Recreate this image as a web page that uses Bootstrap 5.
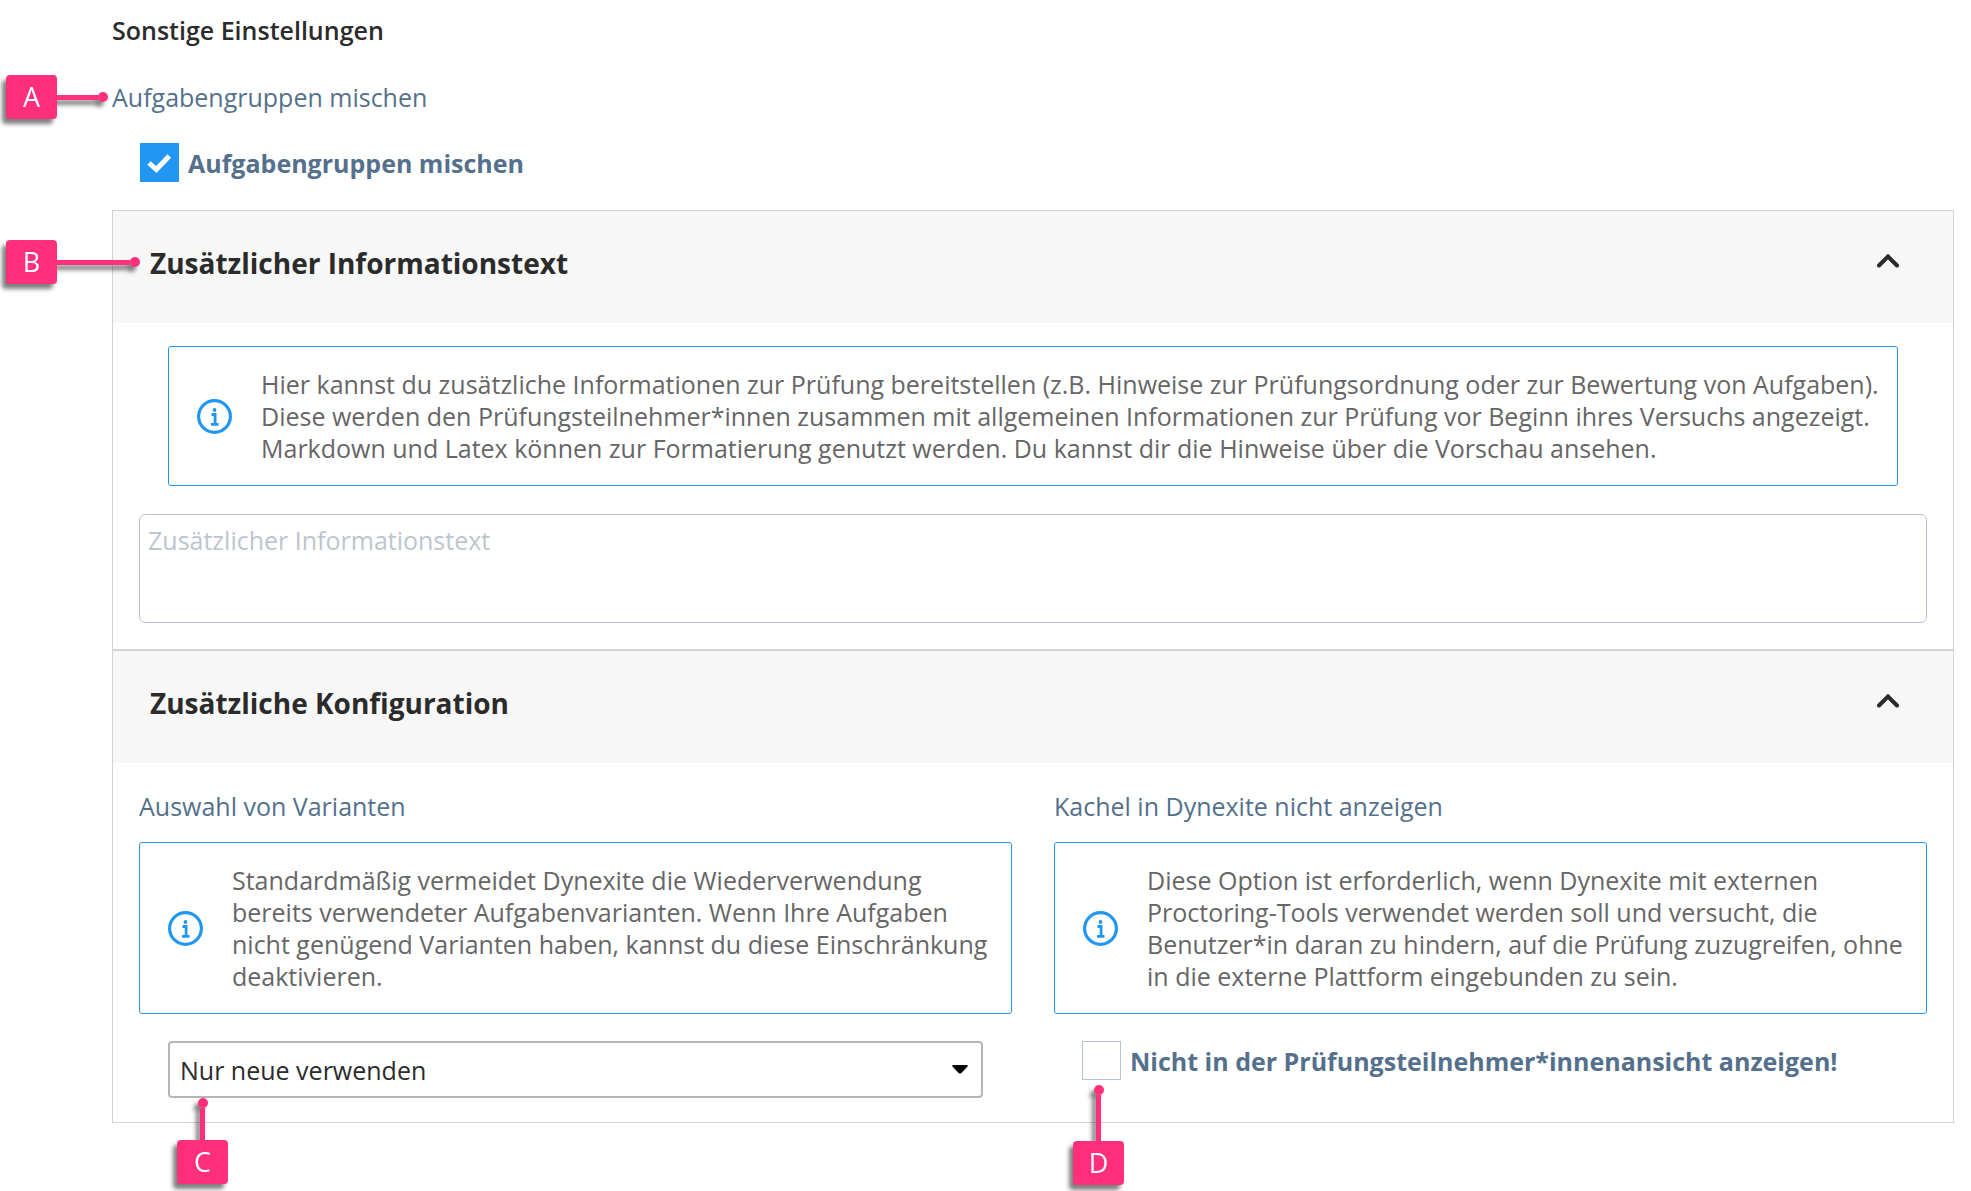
<!DOCTYPE html>
<html lang="de">
<head>
<meta charset="utf-8">
<meta name="viewport" content="width=device-width, initial-scale=1">
<title>Sonstige Einstellungen</title>
<link href="https://cdn.jsdelivr.net/npm/bootstrap@5.3.0/dist/css/bootstrap.min.css" rel="stylesheet">
<style>
body { font-family: "Open Sans", "Noto Sans", sans-serif; font-size: 25px; line-height: 32px; color: #2b2b2b; background: #fff; }
.settings { padding: 14px 17px 68px 112px; }
.settings-title { font-size: 25px; line-height: 32px; font-weight: 600; margin-bottom: 35px; }
.field-name { color: #54708c; font-size: 25px; line-height: 32px; }
.option { margin-left: 28px; gap: 9px; }
.option label { color: #54708c; font-weight: 700; }
.shuffle-row { margin-top: 30px; margin-bottom: 28px; }
.option .form-check-input { width: 39px; height: 39px; margin: 0; border: 1px solid #b8c2cc; border-radius: 0; flex: none; }
.option .form-check-input:checked { background-color: #2196f3; border-color: #2196f3;
  background-size: 39px 39px;
  background-image: url("data:image/svg+xml,%3csvg xmlns='http://www.w3.org/2000/svg' viewBox='0 0 39 39'%3e%3cpath d='M9 20l7.300 6.500 13-13.500' fill='none' stroke='%23fff' stroke-width='5'/%3e%3c/svg%3e"); }
.panel { border: 1px solid #d3d3d3; }
.panel-toggle { width: 100%; border: 0; background: #f7f7f7; padding: 35px 54px 42px 37px; color: #2b2b2b; text-align: left; font-size: 28px; line-height: 35px; font-weight: 700; }
.panel-toggle svg { width: 22px; height: 14px; flex: none; margin-bottom: 5px; }
.panel-content { padding: 23px 26px 26px; }
.panel-content.config { padding: 27px 26px 24px; }
.config .row { --bs-gutter-x: 42px; }
.config .hint { margin-top: 20px; }
.config .control { margin-top: 27px; }
.hint { border: 1px solid #2196f3; border-radius: 3px; padding: 21px 10px 21px 28px; gap: 29px; color: #666; }
.hint svg { width: 35px; height: 35px; flex: none; }
.inset { margin-left: 29px; margin-right: 29px; }
.info-text { height: 109px; margin-top: 28px; border: 1px solid #b8c2cc; border-radius: 6px; padding: 9px 8px; font-size: 25px; line-height: 32px; resize: none; display: block; }
.info-text::placeholder { color: #bcc5cf; }
.variant { width: auto; height: 57px; border: 2px solid #b5b5b5; border-radius: 4px; padding: 0 48px 0 10px; font-size: 25px; line-height: 32px; color: #2b2b2b;
  background-image: url("data:image/svg+xml,%3csvg xmlns='http://www.w3.org/2000/svg' viewBox='0 0 16 9'%3e%3cpath d='M1 0h14l1 1-7 7.500h-2L0 1z'/%3e%3c/svg%3e");
  background-size: 16px 9px; background-position: right 13px center; }
/* Callouts lie over the form and point at the field they belong to */
.callout { position: absolute; display: flex; align-items: center; filter: drop-shadow(-4px 5px 2px rgba(0,0,0,.5)); z-index: 2; pointer-events: none; }
.callout b { width: 51px; height: 44px; border-radius: 4px; background: #ff2f7b; color: #fff; font-weight: 400; font-size: 27px; line-height: 44px; text-align: center; }
.callout i { background: #ff2f7b; width: 41px; height: 5px; }
.callout::after { content: ""; width: 10px; height: 10px; border-radius: 50%; background: #ff2f7b; }
.callout.up { flex-direction: column-reverse; }
.callout.up i { width: 5px; height: 32px; }
.at-name { left: -106px; top: -6px; }
.at-panel { left: -107px; top: 29px; }
.callout.at-panel i { width: 73px; }
.at-select { left: 9px; top: 100%; }
.at-check { left: -9px; top: 100%; margin-top: 5px; }
.callout.at-check i { height: 46px; }
</style>
</head>
<body>
<main class="settings">
  <h1 class="settings-title">Sonstige Einstellungen</h1>

  <div class="field-name position-relative">Aufgabengruppen mischen
    <span class="callout at-name"><b>A</b><i></i></span>
  </div>
  <div class="option shuffle-row d-flex align-items-center">
    <input class="form-check-input" type="checkbox" id="shuffle" checked>
    <label for="shuffle">Aufgabengruppen mischen</label>
  </div>

  <section class="panel position-relative">
    <span class="callout at-panel"><b>B</b><i></i></span>
    <button class="panel-toggle d-flex justify-content-between align-items-center" type="button" data-bs-toggle="collapse" data-bs-target="#info-body" aria-expanded="true" aria-controls="info-body">
      Zusätzlicher Informationstext
      <svg viewBox="0 0 22 14" aria-hidden="true"><path d="M2 11.500L11 2.500l9 9" fill="none" stroke="#2b2b2b" stroke-width="4" stroke-linecap="round"/></svg>
    </button>
    <div class="collapse show" id="info-body">
      <div class="panel-content">
        <div class="hint inset d-flex align-items-center">
          <svg viewBox="0 0 35 35" aria-hidden="true"><circle cx="17.500" cy="17.500" r="15.900" fill="none" stroke="#2196f3" stroke-width="3.200"/><circle cx="17.500" cy="11" r="1.900" fill="#2196f3"/><path d="M14.500 15.500h3.600v9.200M14 25.300h7.500" fill="none" stroke="#2196f3" stroke-width="2.800"/></svg>
          <div>Hier kannst du zusätzliche Informationen zur Prüfung bereitstellen (z.B. Hinweise zur Prüfungsordnung oder zur Bewertung von Aufgaben). Diese werden den Prüfungsteilnehmer*innen zusammen mit allgemeinen Informationen zur Prüfung vor Beginn ihres Versuchs angezeigt. Markdown und Latex können zur Formatierung genutzt werden. Du kannst dir die Hinweise über die Vorschau ansehen.</div>
        </div>
        <textarea class="info-text form-control" aria-label="Zusätzlicher Informationstext" placeholder="Zusätzlicher Informationstext"></textarea>
      </div>
    </div>
  </section>

  <section class="panel">
    <button class="panel-toggle d-flex justify-content-between align-items-center" type="button" data-bs-toggle="collapse" data-bs-target="#config-body" aria-expanded="true" aria-controls="config-body">
      Zusätzliche Konfiguration
      <svg viewBox="0 0 22 14" aria-hidden="true"><path d="M2 11.500L11 2.500l9 9" fill="none" stroke="#2b2b2b" stroke-width="4" stroke-linecap="round"/></svg>
    </button>
    <div class="collapse show" id="config-body">
      <div class="panel-content config">
        <div class="row">
          <div class="col-6">
            <label class="field-name d-block" for="variant">Auswahl von Varianten</label>
            <div class="hint d-flex align-items-center">
              <svg viewBox="0 0 35 35" aria-hidden="true"><circle cx="17.500" cy="17.500" r="15.900" fill="none" stroke="#2196f3" stroke-width="3.200"/><circle cx="17.500" cy="11" r="1.900" fill="#2196f3"/><path d="M14.500 15.500h3.600v9.200M14 25.300h7.500" fill="none" stroke="#2196f3" stroke-width="2.800"/></svg>
              <div>Standardmäßig vermeidet Dynexite die Wiederverwendung bereits verwendeter Aufgabenvarianten. Wenn Ihre Aufgaben nicht genügend Varianten haben, kannst du diese Einschränkung deaktivieren.</div>
            </div>
            <div class="control inset d-grid position-relative">
              <select class="variant form-select" id="variant"><option>Nur neue verwenden</option></select>
              <span class="callout up at-select"><b>C</b><i></i></span>
            </div>
          </div>
          <div class="col-6">
            <div class="field-name">Kachel in Dynexite nicht anzeigen</div>
            <div class="hint d-flex align-items-center">
              <svg viewBox="0 0 35 35" aria-hidden="true"><circle cx="17.500" cy="17.500" r="15.900" fill="none" stroke="#2196f3" stroke-width="3.200"/><circle cx="17.500" cy="11" r="1.900" fill="#2196f3"/><path d="M14.500 15.500h3.600v9.200M14 25.300h7.500" fill="none" stroke="#2196f3" stroke-width="2.800"/></svg>
              <div>Diese Option ist erforderlich, wenn Dynexite mit externen Proctoring-Tools verwendet werden soll und versucht, die Benutzer*in daran zu hindern, auf die Prüfung zuzugreifen, ohne in die externe Plattform eingebunden zu sein.</div>
            </div>
            <div class="control option d-flex align-items-center position-relative">
              <input class="form-check-input" type="checkbox" id="hide-tile">
              <label for="hide-tile">Nicht in der Prüfungsteilnehmer*innenansicht anzeigen!</label>
              <span class="callout up at-check"><b>D</b><i></i></span>
            </div>
          </div>
        </div>
      </div>
    </div>
  </section>
</main>
<script src="https://cdn.jsdelivr.net/npm/bootstrap@5.3.0/dist/js/bootstrap.bundle.min.js"></script>
</body>
</html>
